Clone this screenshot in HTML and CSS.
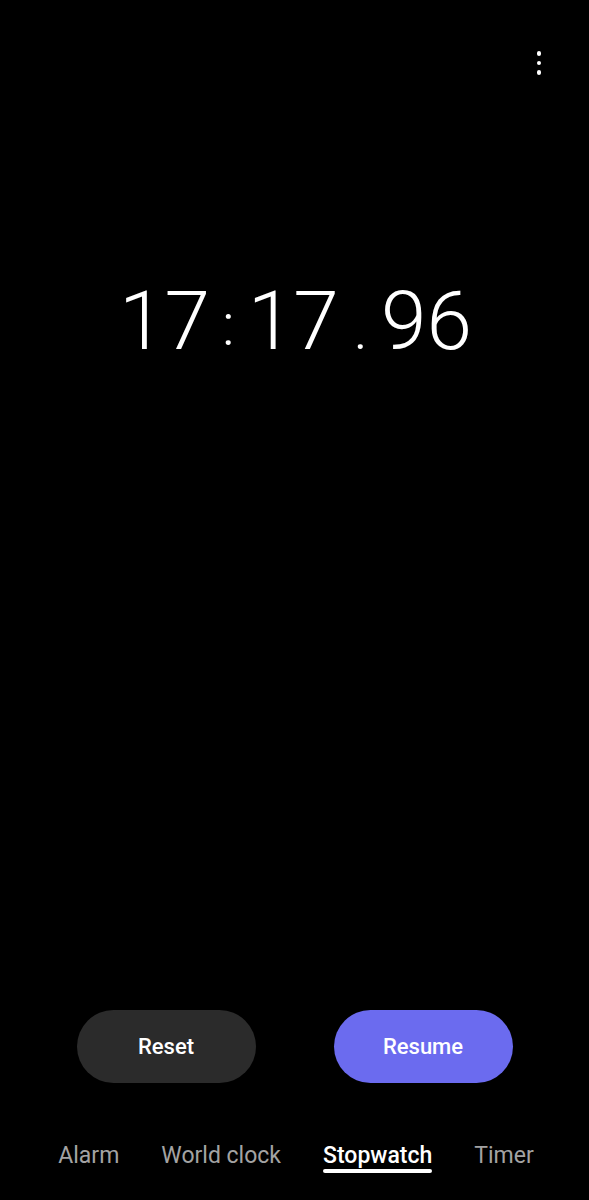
FILE: index.html
```html
<!DOCTYPE html>
<html lang="en">
<head>
<meta charset="utf-8">
<title>Stopwatch</title>
<link rel="stylesheet" href="styles.css">
</head>
<body>
<div class="screen">
  <header class="topbar">
    <button class="menu" aria-label="More options">
      <span class="dot"></span><span class="dot"></span><span class="dot"></span>
    </button>
  </header>
  <main class="display">
    <div class="time">
      <span class="grp">17</span><span class="sep colon">:</span><span class="grp">17</span><span class="sep period">.</span><span class="grp">96</span>
    </div>
  </main>
  <div class="controls">
    <button class="btn reset">Reset</button>
    <button class="btn resume">Resume</button>
  </div>
  <nav class="tabs">
    <span class="tab">Alarm</span>
    <span class="tab">World clock</span>
    <span class="tab active">Stopwatch</span>
    <span class="tab">Timer</span>
  </nav>
</div>
</body>
</html>
```

FILE: styles.css
```css
* { box-sizing: border-box; }
html, body {
  margin: 0;
  padding: 0;
  background: #000;
}
body {
  font-family: Roboto, "Liberation Sans", sans-serif;
  color: #fff;
}
.screen {
  width: 589px;
  height: 1200px;
  display: flex;
  flex-direction: column;
  background: #000;
}
.topbar {
  height: 90px;
  display: flex;
  justify-content: flex-end;
  align-items: flex-start;
  padding: 43px 38px 0 0;
}
.menu {
  width: 24px;
  height: 40px;
  background: none;
  border: 0;
  padding: 8px 0 0;
  display: flex;
  flex-direction: column;
  align-items: center;
  gap: 5px;
}
.dot {
  width: 4.5px;
  height: 4.5px;
  border-radius: 50%;
  background: #fff;
}
.display {
  flex: 1;
  padding-top: 181px;
}
.time {
  display: flex;
  justify-content: center;
  align-items: baseline;
  font-size: 82px;
  font-weight: 300;
  line-height: 100px;
  height: 100px;
  padding-left: 2px;
}
.sep {
  font-size: 60px;
}
.colon { margin: 0 13px 0 12px; position: relative; top: -4px; }
.period { margin: 0 13px 0 15px; }
.controls {
  display: flex;
  justify-content: center;
  gap: 78px;
  margin-bottom: 58px;
}
.btn {
  width: 179px;
  height: 73px;
  border: 0;
  border-radius: 37px;
  color: #fff;
  font-family: Roboto, "Liberation Sans", sans-serif;
  font-size: 22px;
  font-weight: 500;
}
.reset { background: #2b2b2b; }
.resume { background: #6b6bef; }
.tabs {
  display: flex;
  justify-content: center;
  gap: 42px;
  height: 59px;
  padding-left: 3px;
}
.tab {
  font-size: 23px;
  color: #a3a3a3;
  line-height: 30px;
  height: 40px;
  position: relative;
}
.tab.active {
  color: #fff;
  font-weight: 500;
}
.tab.active::after {
  content: "";
  position: absolute;
  left: 0;
  right: 0;
  top: 28px;
  height: 4px;
  border-radius: 2px;
  background: #fff;
}
```
